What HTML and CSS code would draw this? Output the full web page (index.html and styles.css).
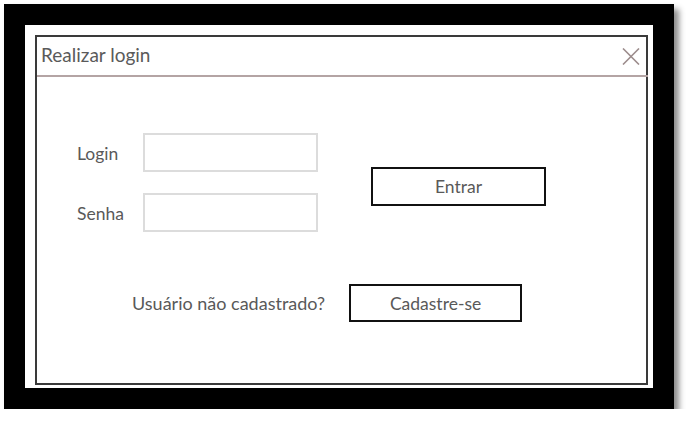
FILE: index.html
```html
<!DOCTYPE html>
<html lang="pt">
<head>
<meta charset="utf-8">
<title>Realizar login</title>
<link rel="stylesheet" href="styles.css">
</head>
<body>
<div class="frame">
  <div class="dialog">
    <div class="titlebar">
      <span class="title">Realizar login</span>
      <svg class="close" width="18" height="17" viewBox="0 0 18 17"><path d="M1 0.5 L17 16.5 M17 0.5 L1 16.5" stroke="#9c8c8c" stroke-width="1.6" fill="none"/></svg>
    </div>
    <div class="content">
      <div class="row-login">
        <div class="fields">
          <div class="field"><span class="label">Login</span><div class="input"></div></div>
          <div class="field"><span class="label">Senha</span><div class="input"></div></div>
        </div>
        <div class="btn btn-entrar">Entrar</div>
      </div>
      <div class="row-signup">
        <span class="question">Usuário não cadastrado?</span>
        <div class="btn btn-signup">Cadastre-se</div>
      </div>
    </div>
  </div>
</div>
</body>
</html>
```

FILE: styles.css
```css
html, body {
  margin: 0;
  padding: 0;
  background: #ffffff;
}
body {
  font-family: Lato, "Open Sans", sans-serif;
  color: #595959;
}
.frame {
  margin: 4px 0 0 4px;
  width: 618px;
  height: 353px;
  border: 21px solid #000;
  background: #fff;
  box-shadow: 5px 5px 6px rgba(0, 0, 0, 0.45);
  padding: 10px 0 0 10px;
  box-sizing: content-box;
}
.dialog {
  width: 609px;
  height: 346px;
  border: 2px solid #3a3a3a;
  display: flex;
  flex-direction: column;
}
.titlebar {
  height: 38px;
  border-bottom: 2px solid #b4a4a4;
  margin-right: -2px;
  display: flex;
  align-items: center;
  justify-content: space-between;
  padding: 0 8px 0 4px;
}
.title {
  font-size: 19px;
  color: #5a5a5a;
  margin-top: -3px;
}
.close {
  display: block;
  margin-top: 0;
}
.content {
  padding: 56px 0 0 40px;
  display: flex;
  flex-direction: column;
}
.row-login {
  display: flex;
  align-items: center;
}
.fields {
  display: flex;
  flex-direction: column;
  gap: 21px;
}
.field {
  display: flex;
  align-items: center;
}
.label {
  width: 66px;
  font-size: 17.5px;
  margin-top: 2px;
}
.input {
  width: 171px;
  height: 35px;
  border: 2px solid #dcdcdc;
}
.btn {
  width: 171px;
  height: 35px;
  border: 2px solid #111;
  display: flex;
  align-items: center;
  justify-content: center;
  font-size: 17.5px;
  color: #595959;
}
.btn-entrar {
  margin-left: 53px;
  margin-top: 8px;
}
.row-signup {
  display: flex;
  align-items: center;
  margin-top: 52px;
  padding-left: 55px;
}
.question {
  font-size: 18px;
}
.btn-signup {
  margin-left: 24px;
  width: 169px;
  height: 34px;
}
```
